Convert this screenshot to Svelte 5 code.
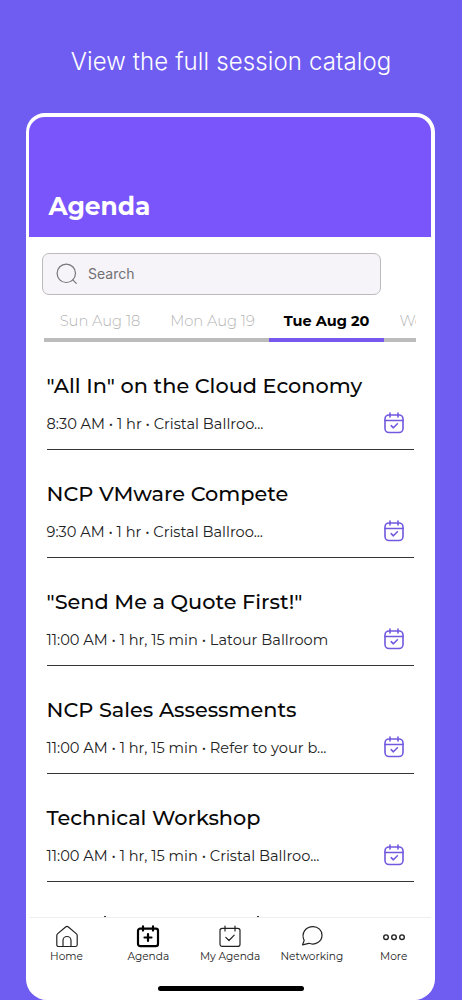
<script>
	let days = [
		{ name: 'Sun Aug 18', id: 'sun' },
		{ name: 'Mon Aug 19', id: 'mon' },
		{ name: 'Tue Aug 20', id: 'tue' },
		{ name: 'Wed Aug 21', id: 'wed' },
	];
	let active = $state('tue');

	let sessions = [
		{ title: '"All In" on the Cloud Economy', meta: '8:30 AM • 1 hr • Cristal Ballroo...' },
		{ title: 'NCP VMware Compete', meta: '9:30 AM • 1 hr • Cristal Ballroo...' },
		{ title: '"Send Me a Quote First!"', meta: '11:00 AM • 1 hr, 15 min • Latour Ballroom' },
		{ title: 'NCP Sales Assessments', meta: '11:00 AM • 1 hr, 15 min • Refer to your b...' },
		{ title: 'Technical Workshop', meta: '11:00 AM • 1 hr, 15 min • Cristal Ballroo...' },
	];

	let menu = ['Home', 'Agenda', 'My Agenda', 'Networking', 'More'];
</script>

<div class="page">
	<h1>View the full session catalog</h1>

	<div class="phone">
		<header><h2>Agenda</h2></header>

		<div class="search">
			<svg width="22" height="22" viewBox="0 0 22 22">
				<circle cx="10.3" cy="10.3" r="9.2" />
				<path d="M16.8 16.8 L20.3 20.3" />
			</svg>
			<span>Search</span>
		</div>

		<div class="tabs">
			{#each days as day}
				<button class={day.id} class:active={active === day.id} onclick={() => (active = day.id)}>
					<span>{day.name}</span>
				</button>
			{/each}
		</div>

		<main>
			{#each sessions as s}
				<div class="session">
					<h3>{s.title}</h3>
					<div class="info">
						<p>{s.meta}</p>
						<svg class="added" width="20" height="22" viewBox="0 0 20 22">
							<rect x="1" y="3" width="18" height="17.5" rx="4" />
							<path d="M1 8.5 H19 M6 1 V5 M14 1 V5 M7.2 13.7 L9.4 15.8 L13.4 11.8" />
						</svg>
					</div>
				</div>
			{/each}
			<!-- top of the next session, under the menu -->
			<div class="peek"><i></i><i></i></div>
		</main>

		<nav>
			{#each menu as item}
				<div class="item">
					<svg width="24" height="24" viewBox="0 0 24 24">
						{#if item === 'Home'}
							<path d="M1.8 10.6 Q1.8 9.6 2.5 8.9 L10.6 2 Q12 .8 13.4 2 L21.5 8.9 Q22.2 9.6 22.2 10.6 V19.7 Q22.2 21.5 20.4 21.5 H3.6 Q1.8 21.5 1.8 19.7 Z M8 21.5 V15.5 A4 4 0 0 1 16 15.5 V21.5" />
						{:else if item === 'Agenda'}
							<g class="bold">
								<rect x="2" y="3.6" width="20" height="17.6" rx="2.2" />
								<path d="M7 1.4 V5.6 M17 1.4 V5.6 M12 9 V16 M8.5 12.5 H15.5" />
							</g>
						{:else if item === 'My Agenda'}
							<rect x="2" y="3.4" width="20" height="18" rx="2.2" />
							<path d="M7 1 V6 M17 1 V6 M7.8 12.3 L11 15.5 L16.2 10.2" />
						{:else if item === 'Networking'}
							<path d="M2.6 19.8 L4.2 15.4 C.8 8.6 5.5 1.6 13 1.6 C18.3 1.6 22 5.6 22 10.2 C22 16.6 15.3 20.8 8.8 18.3 Z" />
						{:else}
							<g class="dots">
								<circle cx="4" cy="12.2" r="2.3" />
								<circle cx="12" cy="12.2" r="2.3" />
								<circle cx="20" cy="12.2" r="2.3" />
							</g>
						{/if}
					</svg>
					<span>{item}</span>
				</div>
			{/each}
		</nav>
		<div class="bar"></div>
	</div>
</div>

<style>
:global(body) {
	margin: 0;
	background: #6e5df0;
}

.page {
	height: 1000px;
	overflow: hidden;
	display: flex;
	flex-direction: column;
	align-items: center;
	background: #6e5df0;
	font-family: Montserrat, Inter, sans-serif;
}

h1, h2, h3, p {
	margin: 0;
}

h1 {
	height: 113px;
	padding-top: 47px;
	box-sizing: border-box;
	font: 300 24px/30px Inter, sans-serif;
	letter-spacing: 0.12px;
	color: #fff;
	white-space: nowrap;
}

.phone {
	width: 409px;
	height: 887px;
	margin-right: 1px;
	box-sizing: border-box;
	border: 4px solid #fff;
	border-left-width: 3px;
	border-bottom-width: 1px;
	border-radius: 19px 19px 21px 21px;
	background: #fff;
	overflow: hidden;
	display: flex;
	flex-direction: column;
}

header {
	height: 120px;
	flex: none;
	padding: 72px 0 0 19.5px;
	box-sizing: border-box;
	background: #7955fb;
}

h2 {
	font-size: 24.9px;
	line-height: 34px;
	font-weight: 700;
	color: #fff;
}

.search {
	display: flex;
	align-items: center;
	gap: 10px;
	flex: none;
	width: 339px;
	height: 42px;
	margin: 16px 0 0 13px;
	padding-left: 13px;
	box-sizing: border-box;
	border: 1px solid #bcbabd;
	border-radius: 7px;
	background: #f6f4f8;
	font: 400 14px Inter, sans-serif;
	color: #717074;
}

.search span {
	margin-top: -1px;
}

svg {
	fill: none;
	stroke: #222;
	stroke-width: 1.2;
	stroke-linecap: round;
	stroke-linejoin: round;
	flex: none;
}

.search svg {
	stroke: #77757a;
}

.tabs {
	display: flex;
	flex: none;
	width: 372px;
	height: 47px;
	margin-left: 15px;
	overflow: hidden;
}

button {
	flex: none;
	width: 112px;
	padding: 9px 0 0;
	border: 0;
	border-bottom: 4px solid #bdbcbd;
	background: none;
	font: 300 14.7px/34px Montserrat, Inter, sans-serif;
	color: #b5b5b5;
	white-space: nowrap;
}

.mon {
	width: 113px;
}

.tue {
	width: 115px;
}

.wed {
	width: 116px;
}

button.active {
	border-color: #7658ef;
	font-size: 14.5px;
	font-weight: 700;
	color: #000;
}

main {
	height: 575px;
	flex: none;
	padding: 0 17px 0 17.5px;
	overflow: hidden;
}

.session {
	height: 108px;
	padding-top: 27px;
	box-sizing: border-box;
	border-bottom: 1px solid #333638;
}

h3 {
	font-size: 20.83px;
	line-height: 34px;
	font-weight: 500;
	color: #080808;
	white-space: nowrap;
}

.info {
	display: flex;
	align-items: center;
	justify-content: space-between;
	height: 41px;
	padding-right: 10.5px;
}

p {
	font-size: 14.6px;
	line-height: 18px;
	color: #222;
	white-space: nowrap;
}

.added {
	margin-bottom: 1px;
	stroke: #7259de;
	stroke-width: 1.6;
}

.peek {
	display: flex;
	gap: 151px;
	padding: 34px 0 0 57.5px;
}

.peek i {
	width: 2px;
	height: 1px;
	background: #333;
}

nav {
	display: flex;
	flex: none;
	height: 69px;
	padding: 7px 0 0;
	box-sizing: border-box;
	border-top: 1px solid #eee;
}

.item {
	flex: none;
	width: 81.8px;
	display: flex;
	flex-direction: column;
	align-items: center;
	font-size: 10.6px;
	line-height: 15px;
	color: #222;
	white-space: nowrap;
}

.item:first-child {
	margin-left: -3.4px;
}

.bold {
	stroke: #000;
	stroke-width: 2.2;
}

.dots {
	stroke-width: 1.4;
}

.bar {
	flex: none;
	width: 146px;
	height: 5px;
	margin-left: 128.5px;
	border-radius: 3px;
	background: #000;
}
</style>
